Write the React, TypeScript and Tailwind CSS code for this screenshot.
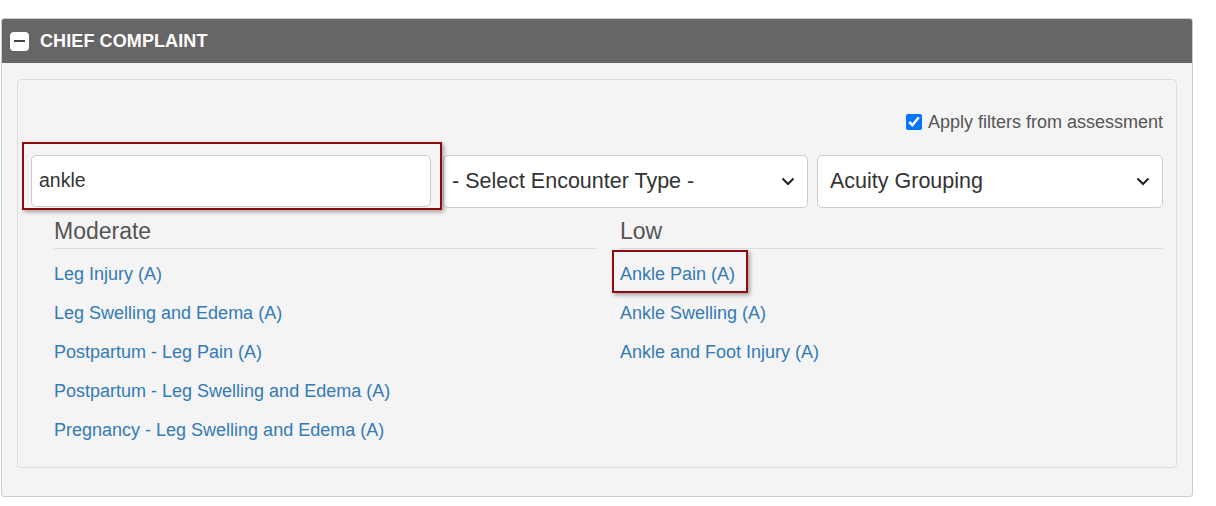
import React from "react";

const moderate = [
  "Leg Injury (A)",
  "Leg Swelling and Edema (A)",
  "Postpartum - Leg Pain (A)",
  "Postpartum - Leg Swelling and Edema (A)",
  "Pregnancy - Leg Swelling and Edema (A)",
];

const low = ["Ankle Pain (A)", "Ankle Swelling (A)", "Ankle and Foot Injury (A)"];

const Chevron: React.FC = () => (
  <svg width="14" height="9" viewBox="0 0 14 9" fill="none">
    <path d="M1.5 1.5L7 7L12.5 1.5" stroke="#222" strokeWidth="2" />
  </svg>
);

const SelectBox: React.FC<{ label: string; width: string; pad: string }> = ({ label, width, pad }) => (
  <div
    className={`${width} ${pad} h-[53px] bg-white border border-[#ccc] rounded-[5px] flex items-center justify-between pr-[12px] text-[21.5px] text-[#333]`}
  >
    <span>{label}</span>
    <Chevron />
  </div>
);

const Column: React.FC<{ title: string; items: string[] }> = ({ title, items }) => (
  <div className="w-[543px]">
    <h4 className="text-[23px] leading-[28px] text-[#555] pb-[3px] border-b border-[#ddd]">
      {title}
    </h4>
    <ul className="mt-[6px]">
      {items.map((item) => (
        <li key={item} className="h-[39px] flex items-center">
          <a className="text-[18px] text-[#337ab7] cursor-pointer">{item}</a>
        </li>
      ))}
    </ul>
  </div>
);

export default function App() {
  return (
    <div
      className="relative bg-white w-[1216px] h-[506px] pt-[18px] pl-[1px]"
      style={{ fontFamily: '"Liberation Sans", Arial, sans-serif' }}
    >
      <div className="w-[1192px] border border-[#ccc] bg-[#f4f4f4] rounded-[3px] overflow-hidden">
        {/* Header */}
        <div className="h-[44px] bg-[#666666] flex items-center pl-[8px] gap-[11px]">
          <div className="w-[19px] h-[19px] bg-white rounded-[4px] flex items-center justify-center">
            <div className="w-[11px] h-[2px] bg-[#444]" />
          </div>
          <span className="text-white font-bold text-[18px] tracking-[0.1px]">CHIEF COMPLAINT</span>
        </div>

        {/* Body */}
        <div className="px-[15px] pt-[16px] pb-[28px]">
          <div className="border border-[#ddd] rounded-[4px] bg-[#f4f4f4] px-[13px] pt-[31px] pb-[17px]">
            <div className="flex justify-end items-center h-[22px] gap-[6px]">
              <input type="checkbox" defaultChecked className="w-[16px] h-[16px] m-0" />
              <span className="text-[18px] text-[#555]">Apply filters from assessment</span>
            </div>

            <div className="flex mt-[22px]">
              <div className="w-[401px] h-[52px] bg-white border border-[#ccc] rounded-[5px] flex items-center pl-[7px] text-[19.5px] text-[#333]">
                ankle
              </div>
              <div className="ml-[12px]">
                <SelectBox label="- Select Encounter Type -" width="w-[365px]" pad="pl-[8px]" />
              </div>
              <div className="ml-[9px]">
                <SelectBox label="Acuity Grouping" width="w-[346px]" pad="pl-[12px]" />
              </div>
            </div>

            <div className="flex pl-[23px] gap-[23px] mt-[9px]">
              <Column title="Moderate" items={moderate} />
              <Column title="Low" items={low} />
            </div>
          </div>
        </div>
      </div>

      {/* Annotation boxes */}
      <div className="absolute left-[22px] top-[142px] w-[420px] h-[68px] border-[2.5px] border-[#8e0b0b] shadow-[2px_2px_4px_rgba(0,0,0,0.35)] pointer-events-none" />
      <div className="absolute left-[612px] top-[250px] w-[136px] h-[43px] border-[2.5px] border-[#8e0b0b] shadow-[2px_2px_4px_rgba(0,0,0,0.35)] pointer-events-none" />
    </div>
  );
}
